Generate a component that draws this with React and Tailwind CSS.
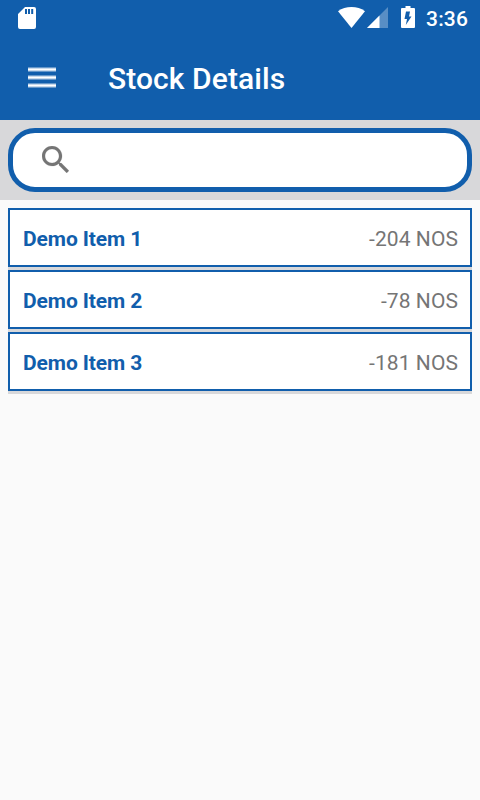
const items = [
  { name: 'Demo Item 1', stock: '-204 NOS' },
  { name: 'Demo Item 2', stock: '-78 NOS' },
  { name: 'Demo Item 3', stock: '-181 NOS' },
];

function StatusBar() {
  return (
    <div className="h-9 flex items-start justify-between text-white">
      <svg className="mt-[7px] ml-[18px] w-[18px] h-[22px]" viewBox="0 0 18 22" fill="currentColor">
        <path
          fillRule="evenodd"
          d="M7 0h9a2 2 0 0 1 2 2v18a2 2 0 0 1-2 2H2a2 2 0 0 1-2-2V7zM7 2v5h2V2zM10 2v5h2V2zM13.200 2v5h2V2z"
        />
      </svg>
      <div className="flex items-start pr-3">
        <svg className="mt-[7px] w-[27px] h-[21px]" viewBox="0 0 27 21" fill="currentColor">
          <path d="M13.500 21L0 4.200C3.800 1.400 8.500 0 13.500 0S23.200 1.400 27 4.200z" />
        </svg>
        <svg className="mt-[7px] ml-[2px] w-[21px] h-[21px]" viewBox="0 0 21 21" fill="currentColor">
          <path d="M0 21L21 0v21z" opacity="0.3" />
          <path d="M0 21L12.500 8.500V21z" />
        </svg>
        <svg className="mt-[6px] ml-[13px] w-[14px] h-[22px]" viewBox="0 0 14 22" fill="currentColor">
          <path
            fillRule="evenodd"
            d="M4.500 0h5v2H13a1 1 0 0 1 1 1v18a1 1 0 0 1-1 1H1a1 1 0 0 1-1-1V3a1 1 0 0 1 1-1h3.500zM9 5.500H5L3.500 13H6l-1.200 6L10.500 10.500H8z"
          />
        </svg>
        <span className="mt-px ml-[11px] text-[21px] leading-9 font-medium tracking-[0.15px]">3:36</span>
      </div>
    </div>
  );
}

function Toolbar() {
  return (
    <div className="h-[84px] flex items-center text-white">
      <svg className="mb-[2px] ml-7 w-7 h-[21px]" viewBox="0 0 28 21" fill="currentColor">
        <path d="M0 0h28v5H0zM0 8h28v5H0zM0 16h28v5H0z" opacity="0.35" />
        <path d="M0 1h28v3H0zM0 9h28v3H0zM0 17h28v3H0z" opacity="0.65" />
        <path d="M0 2h28v1H0zM0 10h28v1H0zM0 18h28v1H0z" />
      </svg>
      <h1 className="ml-[52px] text-[30px] font-medium tracking-[0.08px]">Stock Details</h1>
    </div>
  );
}

export default function App() {
  return (
    <div className="w-[480px] h-[800px] overflow-hidden bg-[#fafafa] font-['Roboto',sans-serif]">
      <header className="bg-[#115eac]">
        <StatusBar />
        <Toolbar />
      </header>

      <div className="h-20 p-2 bg-[#d8d8da]">
        <div className="h-16 flex items-center rounded-[27px] border-5 border-[#115eac] bg-white">
          <svg className="mb-px ml-[29px] w-[27px] h-[27px] text-[#757575]" viewBox="3 3 17.490 17.490" fill="currentColor" stroke="currentColor" strokeWidth="0.1">
            <path d="M15.500 14h-.79l-.28-.27C15.410 12.590 16 11.110 16 9.500 16 5.910 13.090 3 9.500 3S3 5.910 3 9.500 5.910 16 9.500 16c1.610 0 3.090-.59 4.230-1.570l.27.28v.79l5 4.990L20.490 19l-4.990-5zm-6 0C7.010 14 5 11.990 5 9.500S7.010 5 9.500 5 14 7.010 14 9.500 11.990 14 9.500 14z" />
          </svg>
        </div>
      </div>

      <ul className="p-2">
        {items.map((item) => (
          <li key={item.name} className="border-b-3 border-[#d8d8da]">
            <div className="h-[59px] flex items-center justify-between border-2 border-[#115eac] bg-white pt-1 pl-[13px] pr-3 text-[21px]">
              <span className="font-bold text-[#115eac] tracking-[-0.1px]">{item.name}</span>
              <span className="text-[#757575] tracking-[0.08px]">{item.stock}</span>
            </div>
          </li>
        ))}
      </ul>
    </div>
  );
}
